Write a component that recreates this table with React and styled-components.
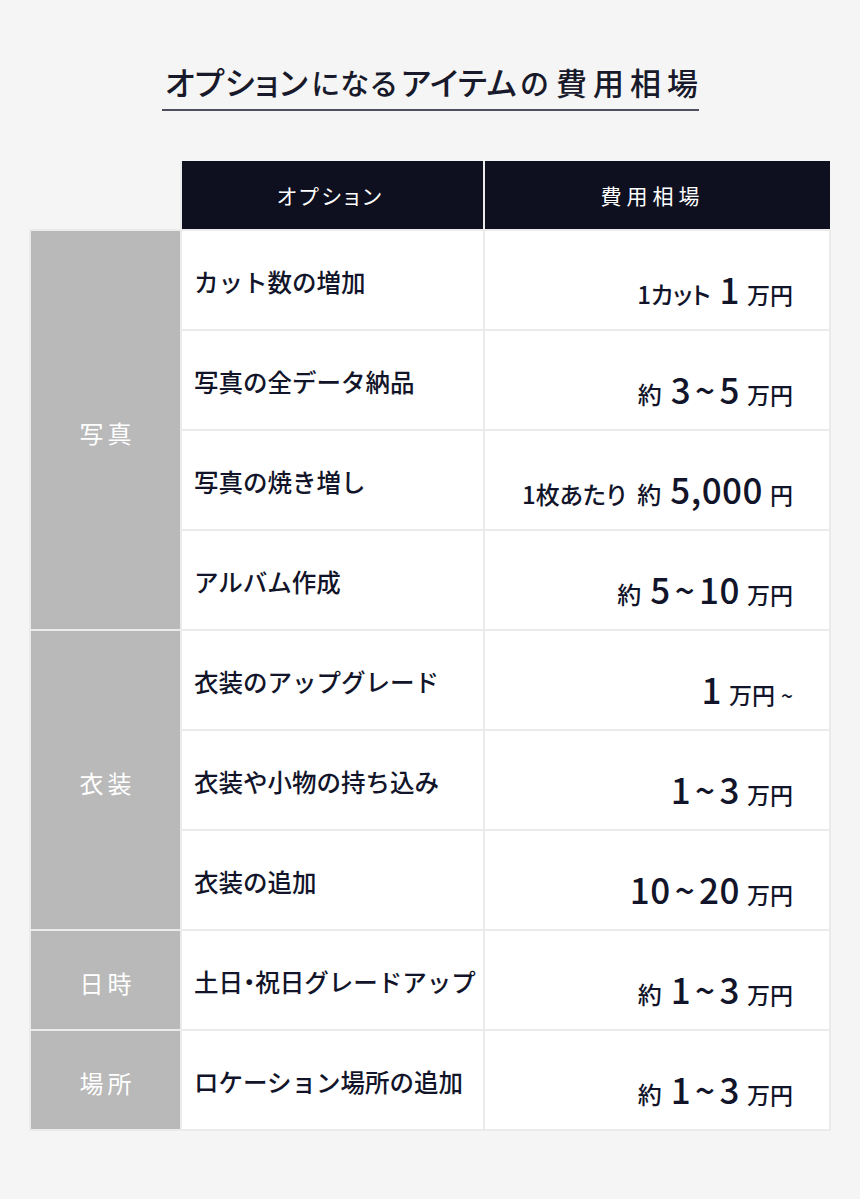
import React from 'react';
import styled, { createGlobalStyle } from 'styled-components';

const GlobalStyle = createGlobalStyle`
  html, body {
    margin: 0;
    padding: 0;
    background: #f5f5f5;
  }
  body {
    font-family: "Noto Sans CJK JP", "Noto Sans", sans-serif;
    color: #12152a;
  }
`;

const Page = styled.div`
  width: 860px;
  min-height: 1199px;
  box-sizing: border-box;
  padding-top: 58px;
  display: flex;
  flex-direction: column;
  align-items: center;
`;

const Title = styled.h1`
  margin: 0 0 0 1px;
  padding: 0 1px 4px 3px;
  border-bottom: 2px solid #4d4f5e;
  font-weight: 500;
  color: #181a2b;
  line-height: 46px;
  white-space: nowrap;
`;

const Kana = styled.span`
  font-size: 32px;
  font-feature-settings: "palt";
  letter-spacing: 0.5px;
`;

const Hira = styled.span`
  font-size: 29px;
  margin: 0 3px;
`;

const Kanji = styled.span`
  font-size: 31px;
  letter-spacing: 6px;
  margin-left: 4px;
  margin-right: -6px;
`;

const Table = styled.table`
  margin-top: 50px;
  width: 800px;
  border-collapse: collapse;
  table-layout: fixed;
`;

const Corner = styled.th`
  border: none;
  padding: 0;
`;

const HeadCell = styled.th`
  background: #0e1020;
  color: #fff;
  height: 68px;
  padding: 0 ${p => p.shift}px 0 0;
  font-size: 21px;
  font-weight: 400;
  letter-spacing: ${p => (p.kana ? '3px' : '5px')};
  font-feature-settings: ${p => (p.kana ? '"palt"' : 'normal')};
  border: 2px solid #ebebeb;
  border-top: none;
  border-right: ${p => (p.last ? 'none' : '2px solid #ebebeb')};
`;

const Category = styled.td`
  background: #b9b9b9;
  color: #fff;
  text-align: center;
  vertical-align: middle;
  font-size: 24px;
  letter-spacing: 4px;
  border: 2px solid #ebebeb;
  padding: 4px 0 0 4px;
`;

const Option = styled.td`
  background: #fff;
  height: 96px;
  padding: 2px 0 0 12px;
  font-size: 24.5px;
  font-weight: 500;
  color: #12152a;
  border: 2px solid #ebebeb;
  white-space: nowrap;
`;

const Dot = styled.span`
  font-feature-settings: "palt";
`;

const Price = styled.td`
  background: #fff;
  text-align: right;
  padding: 17px 36px 0 0;
  border: 2px solid #ebebeb;
  white-space: nowrap;
  color: #12152a;
  font-weight: 500;
`;

const Pre = styled.span`
  font-size: 24px;
  margin-right: 9px;
  word-spacing: 6px;
  font-feature-settings: "palt";
`;

const Num = styled.span`
  font-size: 35px;
  letter-spacing: 0.5px;
`;

const Wave = styled.span`
  margin: 0 4px;
`;

const Unit = styled.span`
  font-size: 23px;
  margin-left: 7px;
`;

const Tilde = styled.span`
  font-size: 21px;
  margin-left: 6px;
`;

const groups = [
  {
    name: '写真',
    rows: [
      { option: 'カット数の増加', pre: '1カット', num: ['1'], unit: '万円' },
      { option: '写真の全データ納品', pre: '約', num: ['3', '5'], unit: '万円' },
      { option: '写真の焼き増し', pre: '1枚あたり 約', num: ['5,000'], unit: '円' },
      { option: 'アルバム作成', pre: '約', num: ['5', '10'], unit: '万円' },
    ],
  },
  {
    name: '衣装',
    rows: [
      { option: '衣装のアップグレード', num: ['1'], unit: '万円', after: '~' },
      { option: '衣装や小物の持ち込み', num: ['1', '3'], unit: '万円' },
      { option: '衣装の追加', num: ['10', '20'], unit: '万円' },
    ],
  },
  {
    name: '日時',
    rows: [{ option: '土日・祝日グレードアップ', pre: '約', num: ['1', '3'], unit: '万円' }],
  },
  {
    name: '場所',
    rows: [{ option: 'ロケーション場所の追加', pre: '約', num: ['1', '3'], unit: '万円' }],
  },
];

function OptionText({ text }) {
  const parts = text.split('・');
  if (parts.length === 1) return text;
  return (
    <>
      {parts[0]}
      <Dot>・</Dot>
      {parts[1]}
    </>
  );
}

export default function App() {
  return (
    <Page>
      <GlobalStyle />
      <Title>
        <Kana>オプション</Kana>
        <Hira>になる</Hira>
        <Kana>アイテム</Kana>
        <Hira>の</Hira>
        <Kanji>費用相場</Kanji>
      </Title>
      <Table>
        <colgroup>
          <col style={{ width: 151 }} />
          <col style={{ width: 303 }} />
          <col style={{ width: 346 }} />
        </colgroup>
        <thead>
          <tr>
            <Corner />
            <HeadCell kana shift={4}>オプション</HeadCell>
            <HeadCell last shift={10}>費用相場</HeadCell>
          </tr>
        </thead>
        <tbody>
          {groups.map(g =>
            g.rows.map((r, i) => (
              <tr key={g.name + i}>
                {i === 0 && <Category rowSpan={g.rows.length}>{g.name}</Category>}
                <Option>
                  <OptionText text={r.option} />
                </Option>
                <Price>
                  {r.pre && <Pre>{r.pre}</Pre>}
                  <Num>
                    {r.num[0]}
                    {r.num[1] && (
                      <>
                        <Wave>~</Wave>
                        {r.num[1]}
                      </>
                    )}
                  </Num>
                  <Unit>{r.unit}</Unit>
                  {r.after && <Tilde>{r.after}</Tilde>}
                </Price>
              </tr>
            ))
          )}
        </tbody>
      </Table>
    </Page>
  );
}
